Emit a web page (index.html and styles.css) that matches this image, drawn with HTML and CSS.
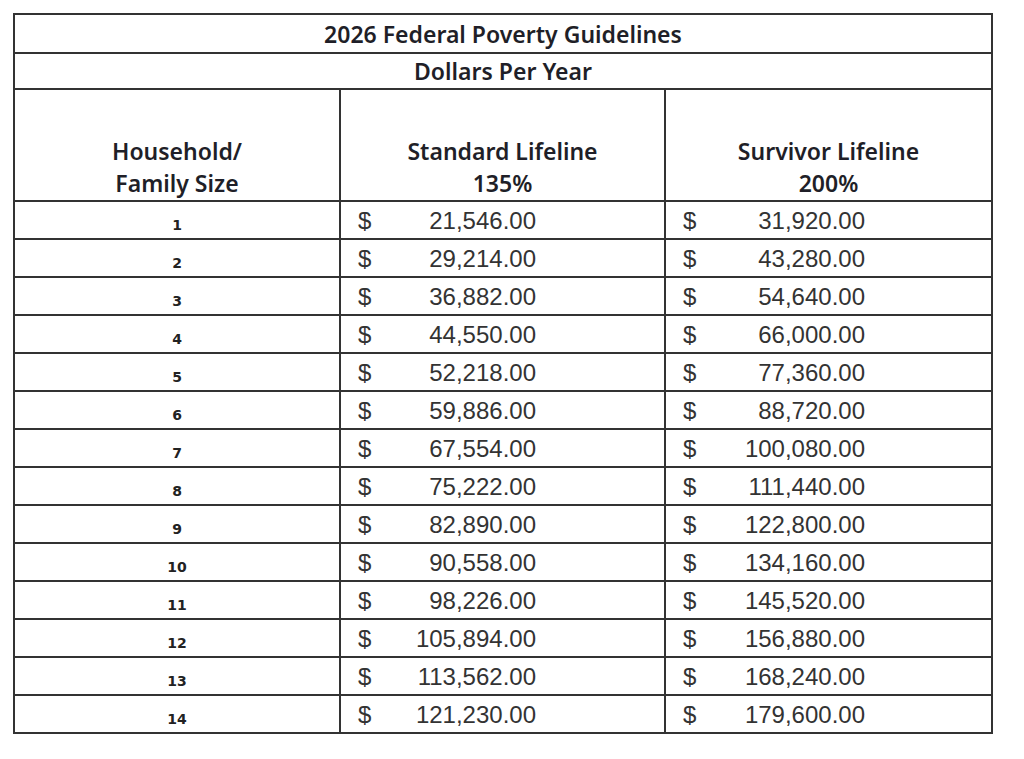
FILE: index.html
```html
<!DOCTYPE html>
<html lang="en">
<head>
<meta charset="utf-8">
<title>2026 Federal Poverty Guidelines</title>
<link rel="stylesheet" href="styles.css">
</head>
<body>
<table class="fpg">
  <colgroup>
    <col class="c1"><col class="c2"><col class="c3">
  </colgroup>
  <thead>
    <tr class="r-title"><th colspan="3">2026 Federal Poverty Guidelines</th></tr>
    <tr class="r-sub"><th colspan="3">Dollars Per Year</th></tr>
    <tr class="r-head">
      <th>Household/<br>Family Size</th>
      <th>Standard Lifeline<br>135%</th>
      <th>Survivor Lifeline<br>200%</th>
    </tr>
  </thead>
  <tbody>
    <tr><td class="size">1</td><td class="amt"><div class="money"><span>$</span><span>21,546.00</span></div></td><td class="amt alt"><div class="money"><span>$</span><span>31,920.00</span></div></td></tr>
    <tr><td class="size">2</td><td class="amt"><div class="money"><span>$</span><span>29,214.00</span></div></td><td class="amt alt"><div class="money"><span>$</span><span>43,280.00</span></div></td></tr>
    <tr><td class="size">3</td><td class="amt"><div class="money"><span>$</span><span>36,882.00</span></div></td><td class="amt alt"><div class="money"><span>$</span><span>54,640.00</span></div></td></tr>
    <tr><td class="size">4</td><td class="amt"><div class="money"><span>$</span><span>44,550.00</span></div></td><td class="amt alt"><div class="money"><span>$</span><span>66,000.00</span></div></td></tr>
    <tr><td class="size">5</td><td class="amt"><div class="money"><span>$</span><span>52,218.00</span></div></td><td class="amt alt"><div class="money"><span>$</span><span>77,360.00</span></div></td></tr>
    <tr><td class="size">6</td><td class="amt"><div class="money"><span>$</span><span>59,886.00</span></div></td><td class="amt alt"><div class="money"><span>$</span><span>88,720.00</span></div></td></tr>
    <tr><td class="size">7</td><td class="amt"><div class="money"><span>$</span><span>67,554.00</span></div></td><td class="amt alt"><div class="money"><span>$</span><span>100,080.00</span></div></td></tr>
    <tr><td class="size">8</td><td class="amt"><div class="money"><span>$</span><span>75,222.00</span></div></td><td class="amt alt"><div class="money"><span>$</span><span>111,440.00</span></div></td></tr>
    <tr><td class="size">9</td><td class="amt"><div class="money"><span>$</span><span>82,890.00</span></div></td><td class="amt alt"><div class="money"><span>$</span><span>122,800.00</span></div></td></tr>
    <tr><td class="size">10</td><td class="amt"><div class="money"><span>$</span><span>90,558.00</span></div></td><td class="amt alt"><div class="money"><span>$</span><span>134,160.00</span></div></td></tr>
    <tr><td class="size">11</td><td class="amt"><div class="money"><span>$</span><span>98,226.00</span></div></td><td class="amt alt"><div class="money"><span>$</span><span>145,520.00</span></div></td></tr>
    <tr><td class="size">12</td><td class="amt"><div class="money"><span>$</span><span>105,894.00</span></div></td><td class="amt alt"><div class="money"><span>$</span><span>156,880.00</span></div></td></tr>
    <tr><td class="size">13</td><td class="amt"><div class="money"><span>$</span><span>113,562.00</span></div></td><td class="amt alt"><div class="money"><span>$</span><span>168,240.00</span></div></td></tr>
    <tr><td class="size">14</td><td class="amt"><div class="money"><span>$</span><span>121,230.00</span></div></td><td class="amt alt"><div class="money"><span>$</span><span>179,600.00</span></div></td></tr>
  </tbody>
</table>
</body>
</html>
```
FILE: styles.css
```css
html, body {
  margin: 0;
  padding: 0;
  background: #ffffff;
}

.fpg {
  margin: 13px 0 0 13px;
  border-collapse: collapse;
  table-layout: fixed;
  width: 978px;
  color: #1f1f28;
}

.fpg .c1 { width: 326px; }
.fpg .c2 { width: 325px; }
.fpg .c3 { width: 327px; }

.fpg th,
.fpg td {
  border: 2px solid #333333;
  padding: 0;
}

.fpg th {
  font-family: "Noto Sans", "Open Sans", sans-serif;
  font-weight: 600;
  font-size: 23px;
  text-align: center;
}

.r-title th {
  height: 35px;
  line-height: 35px;
  padding-top: 2px;
}

.r-sub th {
  height: 34px;
  line-height: 34px;
}

.r-head th {
  height: 109px;
  vertical-align: bottom;
  line-height: 32px;
  padding-bottom: 1px;
}

.fpg tbody td {
  height: 31px;
}

.size {
  font-family: "DejaVu Sans", sans-serif;
  font-weight: 700;
  font-size: 14px;
  color: #222222;
  text-align: center;
  vertical-align: bottom;
  padding-bottom: 5px !important;
  line-height: 15px;
}

.amt {
  font-family: "Liberation Sans", Arial, sans-serif;
  font-size: 24px;
  color: #333333;
  vertical-align: middle;
}

.money {
  display: flex;
  justify-content: space-between;
  padding: 1px 128px 0 17px;
  line-height: 30px;
}

.alt .money {
  padding-right: 126px;
}
```
